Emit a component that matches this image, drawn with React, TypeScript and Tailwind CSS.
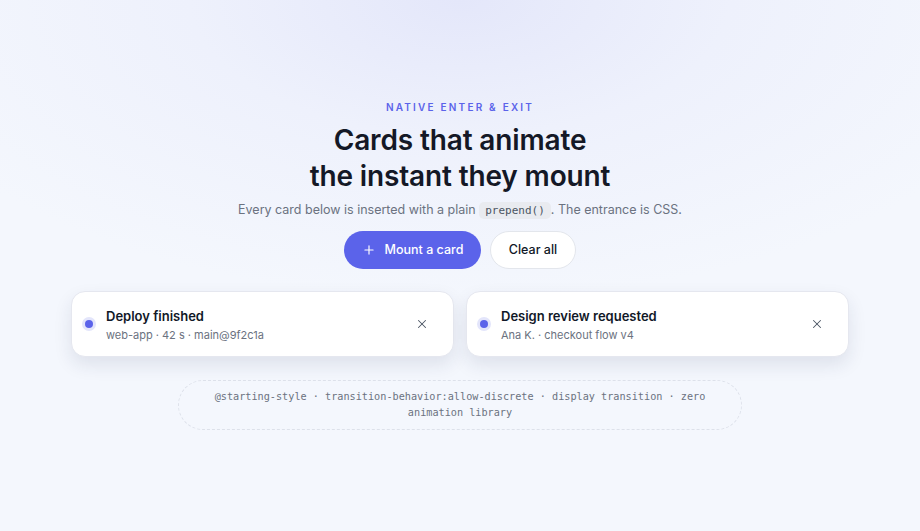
import { Plus, X } from 'lucide-react';

interface Card {
    id: string;
    title: string;
    meta: string;
}

const cards: Card[] = [
    { id: 'deploy', title: 'Deploy finished', meta: 'web-app · 42 s · main@9f2c1a' },
    { id: 'review', title: 'Design review requested', meta: 'Ana K. · checkout flow v4' },
];

function NoticeCard({ card }: { card: Card }) {
    return (
        <div className="flex h-[66px] items-center rounded-[14px] border border-[#e5e7ef] bg-white pl-[10px] pr-[17px] shadow-[0_8px_18px_rgba(30,41,80,0.10)]">
            <div className="flex h-[14px] w-[14px] shrink-0 items-center justify-center rounded-full bg-[#e3e5fb]">
                <div className="h-[8px] w-[8px] rounded-full bg-[#5b63ea]" />
            </div>
            <div className="ml-[10px] mt-[2px] flex flex-1 flex-col">
                <span className="text-[13px] font-semibold leading-[18px] text-[#111827]">{card.title}</span>
                <span className="mt-[2px] text-[11px] leading-[17px] text-[#6b7280]">{card.meta}</span>
            </div>
            <button className="flex h-[28px] w-[28px] items-center justify-center rounded-full text-[#4b5563]">
                <X size={14} strokeWidth={1.75} />
            </button>
        </div>
    );
}

export default function App() {
    return (
        <div className="flex min-h-[531px] w-full flex-col items-center bg-[#f4f7fd] bg-[radial-gradient(ellipse_600px_300px_at_50%_0%,#e4e7fa_0%,#eef1fc_45%,#f4f7fd_100%)] pt-[99px] font-['Inter',sans-serif]">
            <p className="text-[10px] font-semibold leading-[16px] tracking-[0.22em] text-[#5b63ea]">
                NATIVE ENTER &amp; EXIT
            </p>
            <h1 className="mt-[7px] text-center text-[28px] font-semibold leading-[36px] tracking-[-0.005em] text-[#141826]">
                Cards that animate
                <br />
                the instant they mount
            </h1>
            <p className="mt-[5px] text-[12.5px] leading-[22px] text-[#6b7280]">
                Every card below is inserted with a plain{' '}
                <code className="rounded-[5px] bg-[#e9ebf0] px-[6px] py-[2px] font-['DejaVu_Sans_Mono',monospace] text-[11px] text-[#4b5563]">
                    prepend()
                </code>
                . The entrance is CSS.
            </p>
            <div className="mt-[9px] flex gap-[9px]">
                <button className="flex h-[38px] w-[137px] items-center justify-center gap-[9px] rounded-full bg-[#5b63ea] text-[12.5px] font-medium text-white">
                    <Plus size={14} strokeWidth={2} />
                    Mount a card
                </button>
                <button className="flex h-[38px] w-[86px] items-center justify-center rounded-full border border-[#e3e6ec] bg-white text-[12.5px] font-medium text-[#111827]">
                    Clear all
                </button>
            </div>
            <div className="mt-[22px] grid w-[778px] grid-cols-2 gap-[12px]">
                {cards.map((card) => (
                    <NoticeCard key={card.id} card={card} />
                ))}
            </div>
            <div className="mt-[23px] w-[564px] rounded-full border border-dashed border-[#dde1ea] px-[20px] py-[8px] text-center font-['DejaVu_Sans_Mono',monospace] text-[10.2px] leading-[16px] text-[#6b7280]">
                @starting-style · transition-behavior:allow-discrete · display transition · zero animation library
            </div>
        </div>
    );
}
